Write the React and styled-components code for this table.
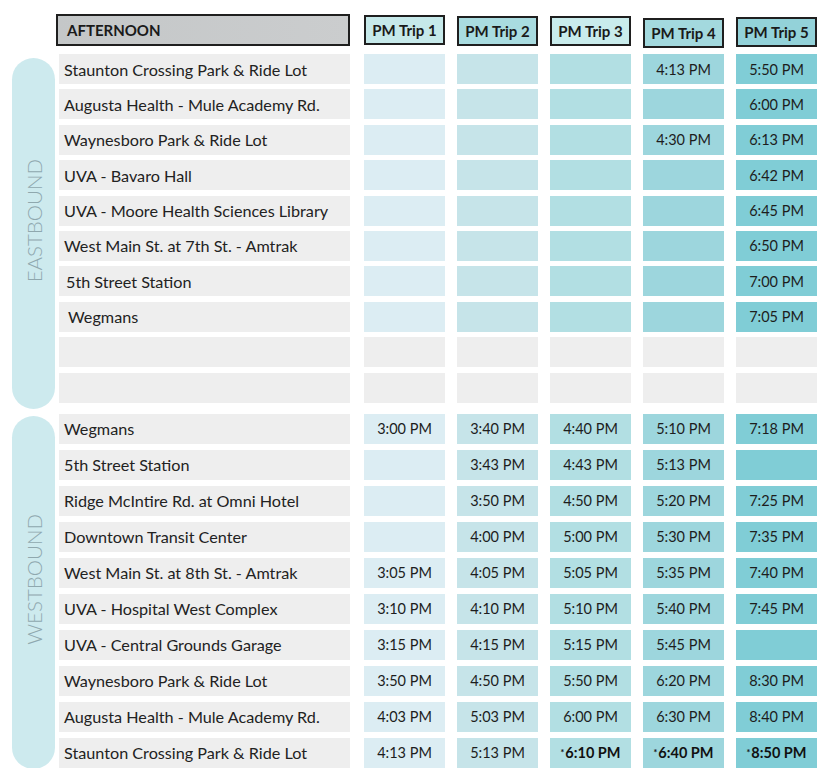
import React from "react";
import styled, { createGlobalStyle, css } from "styled-components";

const Global = createGlobalStyle`
  html, body { margin: 0; padding: 0; background: #ffffff; }
  body { font-family: "Lato", "Open Sans", sans-serif; color: #222; }
`;

const COLS = ["#dcedf3", "#c6e4e9", "#b2dfe3", "#9dd6dd", "#80cdd6"];
const HEAD = ["#c6e9ea", "#a9dce0", "#c9ecec", "#a3d9de", "#93d2d9"];

const Page = styled.div`
  padding: 14px 0 0 12px;
  width: 820px;
`;

const HeaderRow = styled.div`
  display: grid;
  grid-template-columns: 296px repeat(5, 81px);
  grid-template-rows: 32px;
  height: 32px;
  column-gap: 12px;
  margin-left: 44px;
  align-items: start;
`;

const TitleBox = styled.div`
  width: 294px;
  height: 32px;
  box-sizing: border-box;
  border: 2px solid #1f1f1f;
  background: linear-gradient(90deg, #c4c7c8, #cbcdce);
  font-weight: 700;
  font-size: 15px;
  padding-left: 9px;
  display: flex;
  align-items: center;
  color: #1a1a1a;
`;

const TripHead = styled.div`
  height: 30px;
  box-sizing: border-box;
  border: 2px solid #1f1f1f;
  background: ${(p) => p.$bg};
  font-weight: 700;
  font-size: 15px;
  display: flex;
  align-items: center;
  justify-content: center;
  margin-top: ${(p) => p.$dy}px;
  color: #1a1a1a;
  white-space: nowrap;
`;

const Section = styled.div`
  display: flex;
  align-items: stretch;
  margin-top: ${(p) => p.$mt}px;
`;

const Pill = styled.div`
  width: 43px;
  flex: none;
  margin: ${(p) => p.$m};
  background: #cdeaee;
  border-radius: 22px;
  display: flex;
  align-items: center;
  justify-content: center;
  padding-bottom: 26px;
  box-sizing: border-box;
`;

const PillText = styled.span`
  writing-mode: vertical-rl;
  transform: rotate(180deg);
  font-size: 20.5px;
  font-weight: 300;
  color: #8fa8ae;
  white-space: nowrap;
`;

const Table = styled.div`
  margin-left: 4px;
  display: grid;
  grid-template-columns: 293px repeat(5, 81px);
  column-gap: 12px;
  grid-auto-rows: 30px;
  row-gap: ${(p) => p.$gap}px;
`;

const Label = styled.div`
  width: 291px;
  background: #eeeeee;
  display: flex;
  align-items: center;
  padding-left: ${(p) => 5 + (p.$indent || 0)}px;
  box-sizing: border-box;
  font-size: 16.2px;
  color: #222;
  white-space: nowrap;
`;

const Cell = styled.div`
  background: ${(p) => (p.$blank ? "#eeeeee" : p.$bg)};
  display: flex;
  align-items: center;
  justify-content: center;
  font-size: 14.5px;
  color: #1d1d1d;
  white-space: nowrap;
  ${(p) =>
    p.$bold &&
    css`
      font-weight: 700;
      color: #111;
    `}
`;

const Star = styled.sup`
  font-size: 9px;
  vertical-align: 5px;
  margin-right: 1px;
`;

const east = [
  ["Staunton Crossing Park & Ride Lot", 0, ["", "", "", "4:13 PM", "5:50 PM"]],
  ["Augusta Health - Mule Academy Rd.", 0, ["", "", "", "", "6:00 PM"]],
  ["Waynesboro Park & Ride Lot", 0, ["", "", "", "4:30 PM", "6:13 PM"]],
  ["UVA - Bavaro Hall", 0, ["", "", "", "", "6:42 PM"]],
  ["UVA - Moore Health Sciences Library", 0, ["", "", "", "", "6:45 PM"]],
  ["West Main St. at 7th St. - Amtrak", 0, ["", "", "", "", "6:50 PM"]],
  ["5th Street Station", 2, ["", "", "", "", "7:00 PM"]],
  ["Wegmans", 4, ["", "", "", "", "7:05 PM"]],
  ["", 0, null],
  ["", 0, null],
];

const west = [
  ["Wegmans", 0, ["3:00 PM", "3:40 PM", "4:40 PM", "5:10 PM", "7:18 PM"]],
  ["5th Street Station", 0, ["", "3:43 PM", "4:43 PM", "5:13 PM", ""]],
  ["Ridge McIntire Rd. at Omni Hotel", 0, ["", "3:50 PM", "4:50 PM", "5:20 PM", "7:25 PM"]],
  ["Downtown Transit Center", 0, ["", "4:00 PM", "5:00 PM", "5:30 PM", "7:35 PM"]],
  ["West Main St. at 8th St. - Amtrak", 0, ["3:05 PM", "4:05 PM", "5:05 PM", "5:35 PM", "7:40 PM"]],
  ["UVA - Hospital West Complex", 0, ["3:10 PM", "4:10 PM", "5:10 PM", "5:40 PM", "7:45 PM"]],
  ["UVA - Central Grounds Garage", 0, ["3:15 PM", "4:15 PM", "5:15 PM", "5:45 PM", ""]],
  ["Waynesboro Park & Ride Lot", 0, ["3:50 PM", "4:50 PM", "5:50 PM", "6:20 PM", "8:30 PM"]],
  ["Augusta Health - Mule Academy Rd.", 0, ["4:03 PM", "5:03 PM", "6:00 PM", "6:30 PM", "8:40 PM"]],
  ["Staunton Crossing Park & Ride Lot", 0, ["4:13 PM", "5:13 PM", "*6:10 PM", "*6:40 PM", "*8:50 PM"]],
];

function Rows({ data }) {
  return data.map(([name, indent, times], r) => (
    <React.Fragment key={r}>
      <Label $indent={indent}>{name}</Label>
      {COLS.map((bg, c) => {
        const t = times ? times[c] : "";
        const bold = t.startsWith("*");
        return (
          <Cell key={c} $bg={bg} $blank={!times} $bold={bold}>
            {bold ? (
              <>
                <Star>*</Star>
                {t.slice(1)}
              </>
            ) : (
              t
            )}
          </Cell>
        );
      })}
    </React.Fragment>
  ));
}

export default function App() {
  const dys = [1, 2, 2, 4, 3];
  return (
    <>
      <Global />
      <Page>
        <HeaderRow>
          <TitleBox>AFTERNOON</TitleBox>
          {HEAD.map((bg, i) => (
            <TripHead key={i} $bg={bg} $dy={dys[i]}>
              PM Trip {i + 1}
            </TripHead>
          ))}
        </HeaderRow>
        <Section $mt={8}>
          <Pill $m="4px 0 -6px 0">
            <PillText>EASTBOUND</PillText>
          </Pill>
          <Table $gap={5.4}>
            <Rows data={east} />
          </Table>
        </Section>
        <Section $mt={11}>
          <Pill $m="2px 0 -1px 0">
            <PillText>WESTBOUND</PillText>
          </Pill>
          <Table $gap={6}>
            <Rows data={west} />
          </Table>
        </Section>
      </Page>
    </>
  );
}
